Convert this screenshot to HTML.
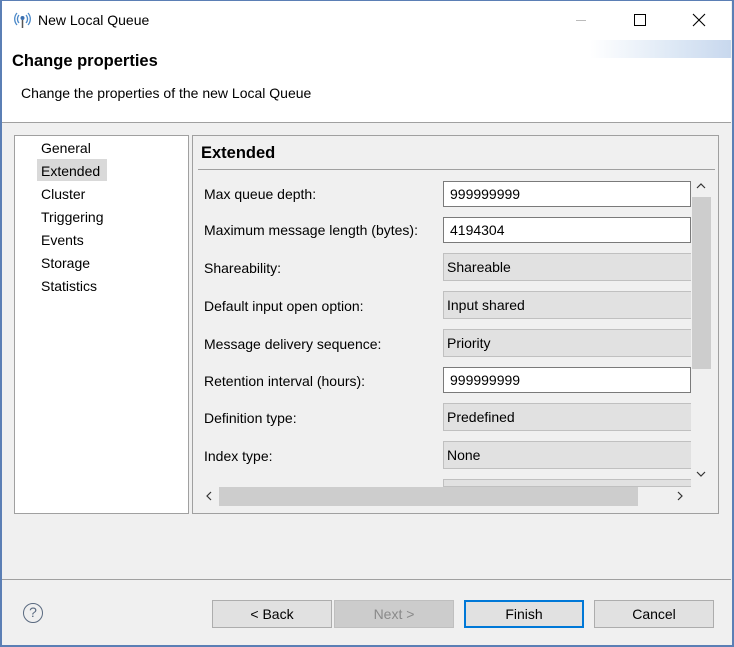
<!DOCTYPE html>
<html><head><style>
*{margin:0;padding:0;box-sizing:border-box}
body{width:734px;height:647px;background:#f0f0f0;font-family:"Liberation Sans",sans-serif;font-size:14px;color:#000;position:relative;overflow:hidden}
.a{position:absolute;white-space:nowrap}
.in{position:absolute;left:443px;width:248px;border:1px solid #7a7a7a;background:#fff;padding-left:6px;line-height:24px;height:26px}
.ro{position:absolute;left:443px;width:248px;border:1px solid #c0c0c0;border-right:none;background:#e1e1e1;padding-left:3px;line-height:26px;height:28px}
.lb{position:absolute;left:204px}
.btn{position:absolute;top:600px;width:120px;height:28px;background:#e1e1e1;border:1px solid #adadad;text-align:center;line-height:26px}
</style></head><body>
<div class="a" style="left:0;top:0;width:734px;height:647px;border:2px solid #5b7fb5;border-top:1px solid #5b7fb5"></div>
<div class="a" style="left:2px;top:1px;width:729px;height:121px;background:#fff"></div>
<div class="a" style="left:590px;top:40px;width:141px;height:18px;background:linear-gradient(90deg,#fff,#dde8f5 60%,#c8d8ee)"></div>
<svg class="a" style="left:14px;top:11px" width="18" height="18" viewBox="0 0 18 18"><path d="M5 4a6 6 0 0 0 0 8M3 2a9 9 0 0 0 0 12M12 4a6 6 0 0 1 0 8M14 2a9 9 0 0 1 0 12" stroke="#4a88c8" stroke-width="1.3" fill="none"/><circle cx="8.5" cy="7" r="2" fill="#3a6fb0"/><path d="M8.5 9v8" stroke="#555" stroke-width="1.5"/></svg>
<div class="a" style="left:38px;top:12px;font-size:14px">New Local Queue</div>
<div class="a" style="left:576px;top:20px;width:10px;height:1px;background:#bbb"></div>
<div class="a" style="left:634px;top:14px;width:12px;height:12px;border:1px solid #000"></div>
<svg class="a" style="left:692px;top:13px" width="14" height="14" viewBox="0 0 14 14"><path d="M1 1L13 13M13 1L1 13" stroke="#000" stroke-width="1.1"/></svg>
<div class="a" style="left:12px;top:52px;font-size:16.5px;font-weight:bold">Change properties</div>
<div class="a" style="left:21px;top:85px">Change the properties of the new Local Queue</div>
<div class="a" style="left:2px;top:122px;width:729px;height:1px;background:#a0a0a0"></div>

<div class="a" style="left:14px;top:135px;width:175px;height:379px;background:#fff;border:1px solid #a0a0a0"></div>
<div class="a" style="left:37px;top:159px;width:70px;height:22px;background:#d9d9d9"></div>
<div class="a" style="left:41px;top:137px;line-height:23px">General<br>Extended<br>Cluster<br>Triggering<br>Events<br>Storage<br>Statistics</div>

<div class="a" style="left:192px;top:135px;width:527px;height:379px;border:1px solid #a0a0a0"></div>
<div class="a" style="left:201px;top:144px;font-size:16.5px;font-weight:bold">Extended</div>
<div class="a" style="left:198px;top:169px;width:517px;height:1px;background:#a0a0a0"></div>

<div class="lb" style="top:186px">Max queue depth:</div>
<div class="in" style="top:181px">999999999</div>
<div class="lb" style="top:222px">Maximum message length (bytes):</div>
<div class="in" style="top:217px">4194304</div>
<div class="lb" style="top:260px">Shareability:</div>
<div class="ro" style="top:253px">Shareable</div>
<div class="lb" style="top:298px">Default input open option:</div>
<div class="ro" style="top:291px">Input shared</div>
<div class="lb" style="top:336px">Message delivery sequence:</div>
<div class="ro" style="top:329px">Priority</div>
<div class="lb" style="top:373px">Retention interval (hours):</div>
<div class="in" style="top:367px">999999999</div>
<div class="lb" style="top:410px">Definition type:</div>
<div class="ro" style="top:403px">Predefined</div>
<div class="lb" style="top:448px">Index type:</div>
<div class="ro" style="top:441px">None</div>
<div class="ro" style="top:479px;height:8px"></div>

<div class="a" style="left:691px;top:177px;width:20px;height:310px;background:#f0f0f0"></div>
<div class="a" style="left:692px;top:197px;width:19px;height:172px;background:#cdcdcd"></div>
<svg class="a" style="left:696px;top:182px" width="10" height="8"><path d="M1 6L5 2L9 6" stroke="#333" stroke-width="1.2" fill="none"/></svg>
<svg class="a" style="left:696px;top:470px" width="10" height="8"><path d="M1 2L5 6L9 2" stroke="#333" stroke-width="1.2" fill="none"/></svg>
<div class="a" style="left:198px;top:487px;width:493px;height:20px;background:#f0f0f0"></div>
<div class="a" style="left:219px;top:487px;width:419px;height:19px;background:#cdcdcd"></div>
<svg class="a" style="left:205px;top:491px" width="8" height="10"><path d="M6 1L2 5L6 9" stroke="#333" stroke-width="1.2" fill="none"/></svg>
<svg class="a" style="left:676px;top:491px" width="8" height="10"><path d="M2 1L6 5L2 9" stroke="#333" stroke-width="1.2" fill="none"/></svg>

<div class="a" style="left:2px;top:579px;width:729px;height:1px;background:#a0a0a0"></div>
<div class="a" style="left:23px;top:603px;width:20px;height:20px;border:1.5px solid #5a6a80;border-radius:50%;text-align:center;line-height:17px;font-size:14px;color:#5a6a80">?</div>
<div class="btn" style="left:212px">&lt; Back</div>
<div class="btn" style="left:334px;background:#cccccc;border-color:#bfbfbf;color:#8a8a8a">Next &gt;</div>
<div class="btn" style="left:464px;border:2px solid #0078d7;line-height:24px">Finish</div>
<div class="btn" style="left:594px">Cancel</div>
</body></html>
